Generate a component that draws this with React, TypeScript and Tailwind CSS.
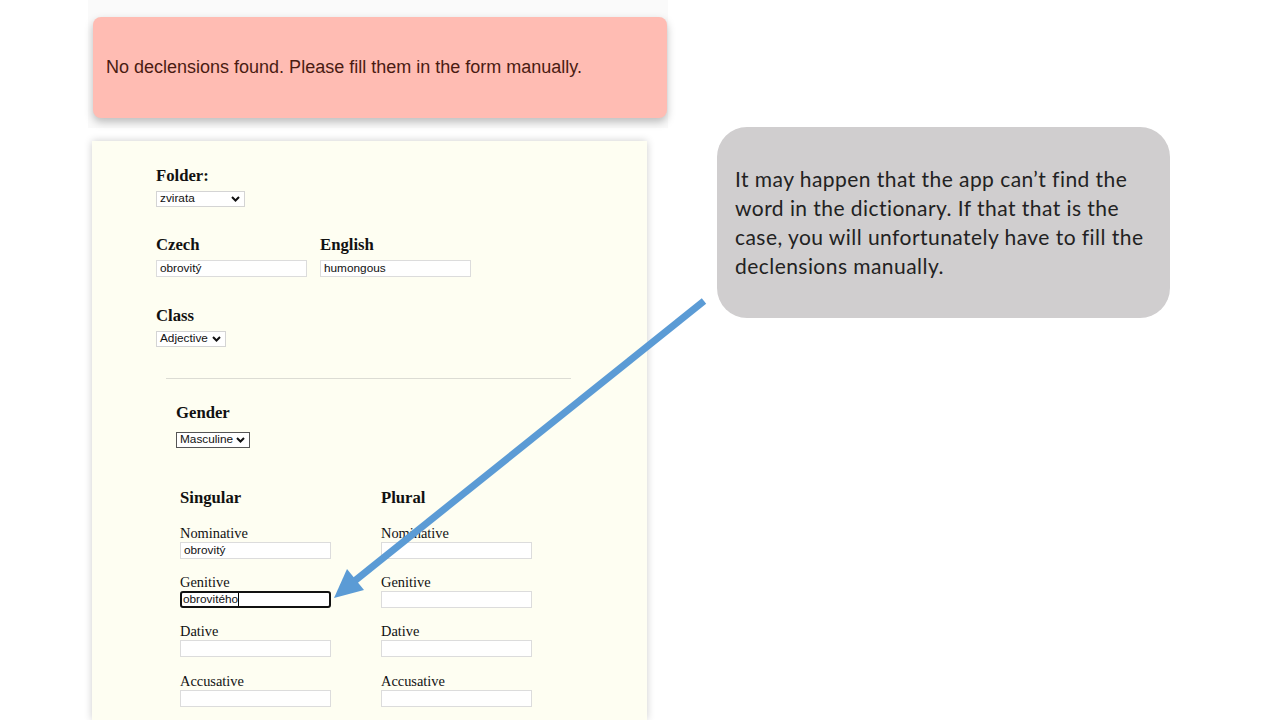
import React from "react";

const serif = { fontFamily: '"Liberation Serif", "Times New Roman", serif' };
const sans = { fontFamily: '"Liberation Sans", Arial, sans-serif' };

function Chevron() {
  return (
    <svg width="9" height="6" viewBox="0 0 9 6" className="shrink-0">
      <path d="M1 1 L4.5 4.5 L8 1" fill="none" stroke="#111" strokeWidth="2" />
    </svg>
  );
}

function FakeSelect({ value, w, dark }: { value: string; w: string; dark?: boolean }) {
  return (
    <div
      className={`${w} h-[16px] bg-white flex items-center justify-between pl-[3px] pr-[4px] text-[11.8px] text-[#111] border ${
        dark ? "border-[#555]" : "border-[#d4d4d4]"
      }`}
      style={sans}
    >
      <span className="leading-none">{value}</span>
      <Chevron />
    </div>
  );
}

function Input({ value, focused }: { value?: string; focused?: boolean }) {
  return (
    <div
      className={`w-[151px] h-[17px] bg-white flex items-center text-[11.8px] text-[#111] ${
        focused ? "border-2 border-[#111] rounded-[3px] pl-[1px]" : "border border-[#dcdcdc] pl-[3px]"
      }`}
      style={sans}
    >
      <span className="leading-none">{value}</span>
      {focused && <span className="w-px h-[13px] bg-black" />}
    </div>
  );
}

function Label({ children }: { children: React.ReactNode }) {
  return (
    <div className="h-[17px] leading-[17px] text-[16.7px] font-bold text-[#111]" style={serif}>
      {children}
    </div>
  );
}

function Case({ label, value, focused }: { label: string; value?: string; focused?: boolean }) {
  return (
    <div className="flex flex-col">
      <div className="h-[14px] leading-[14px] text-[14.4px] text-[#111] mb-[2px]" style={serif}>
        {label}
      </div>
      <Input value={value} focused={focused} />
    </div>
  );
}

export default function App() {
  return (
    <div className="w-[1280px] h-[720px] bg-white relative overflow-hidden flex">
      <div className="ml-[88px] w-[580px] h-[720px] flex flex-col">
        <div className="h-[128px] bg-[#fafafa] pt-[17px] pl-[5px]">
          <div
            className="w-[574px] h-[101px] rounded-[8px] bg-[#ffbcb3] shadow-[0_4px_9px_rgba(0,0,0,0.25)] flex items-center pl-[13px] pb-[1px] text-[18px] text-[#4a1b12]"
            style={sans}
          >
            No declensions found. Please fill them in the form manually.
          </div>
        </div>
        <div className="mt-[13px] ml-[4px] w-[555px] flex-1 bg-[#fefef2] shadow-[0_0_8px_rgba(0,0,0,0.2)] pl-[64px] pt-[26px]">
          <Label>Folder:</Label>
          <div className="mt-[7px]">
            <FakeSelect value="zvirata" w="w-[89px]" />
          </div>
          <div className="mt-[29px] flex gap-[13px]">
            <div>
              <Label>Czech</Label>
              <div className="mt-[7px]">
                <Input value="obrovitý" />
              </div>
            </div>
            <div>
              <Label>English</Label>
              <div className="mt-[7px]">
                <Input value="humongous" />
              </div>
            </div>
          </div>
          <div className="mt-[30px]">
            <Label>Class</Label>
            <div className="mt-[7px]">
              <FakeSelect value="Adjective" w="w-[70px]" />
            </div>
          </div>
          <div className="mt-[31px] ml-[10px] w-[405px] h-px bg-[#dcdcd4]" />
          <div className="ml-[20px] mt-[25px]">
            <Label>Gender</Label>
            <div className="mt-[11px]">
              <FakeSelect value="Masculine" w="w-[74px]" dark />
            </div>
          </div>
          <div className="ml-[24px] mt-[41px] flex gap-[50px]">
            <div className="flex flex-col">
              <Label>Singular</Label>
              <div className="mt-[20px] flex flex-col gap-[16px]">
                <Case label="Nominative" value="obrovitý" />
                <Case label="Genitive" value="obrovitého" focused />
                <Case label="Dative" />
                <div className="mt-[1px]">
                  <Case label="Accusative" />
                </div>
              </div>
            </div>
            <div className="flex flex-col">
              <Label>Plural</Label>
              <div className="mt-[20px] flex flex-col gap-[16px]">
                <Case label="Nominative" />
                <Case label="Genitive" />
                <Case label="Dative" />
                <div className="mt-[1px]">
                  <Case label="Accusative" />
                </div>
              </div>
            </div>
          </div>
        </div>
      </div>

      <div
        className="ml-[49px] mt-[127px] w-[453px] h-[191px] rounded-[30px] bg-[#d0cecf] pl-[18px] pt-[37px] text-[21px] leading-[29px] tracking-[0.45px] text-[#222]"
        style={{ fontFamily: 'Lato, "Open Sans", sans-serif' }}
      >
        It may happen that the app can’t find the
        <br />
        word in the dictionary. If that that is the
        <br />
        case, you will unfortunately have to fill the
        <br />
        declensions manually.
      </div>

      <svg className="absolute left-0 top-0 pointer-events-none" width="1280" height="720" viewBox="0 0 1280 720">
        <line x1="704" y1="301" x2="352" y2="583" stroke="#5b9bd5" strokeWidth="7" />
        <polygon points="334,598 364,590 347,569" fill="#5b9bd5" />
      </svg>
    </div>
  );
}
